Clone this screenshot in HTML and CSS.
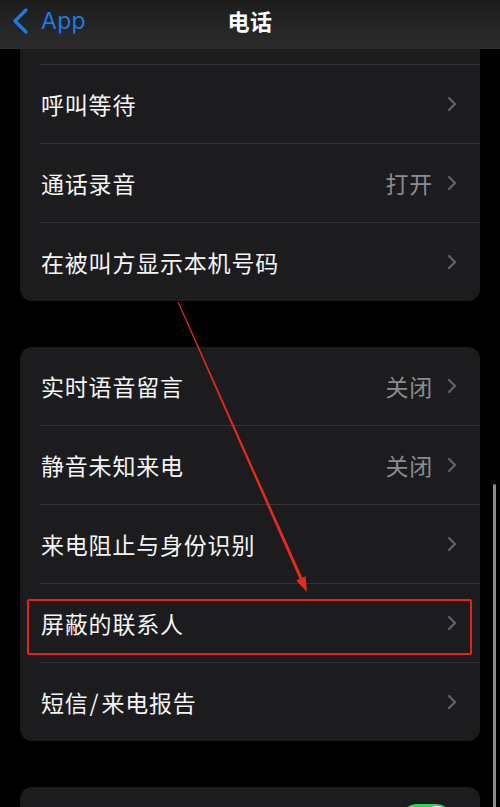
FILE: index.html
```
<!DOCTYPE html>
<html lang="zh-CN">
<head>
<meta charset="utf-8">
<title>电话</title>
<link rel="stylesheet" href="styles.css">
</head>
<body>
<div class="screen">
  <header class="nav">
    <div class="back">
      <svg class="back-icon" width="18" height="26" viewBox="0 0 18 26"><path d="M15 2 L4 13 L15 24" fill="none" stroke="#1f7be0" stroke-width="3.2" stroke-linecap="round" stroke-linejoin="round"/></svg>
      <span class="back-label">App</span>
    </div>
    <div class="title">电话</div>
  </header>

  <main class="content">
    <section class="group group-top">
      <div class="stub"></div>
      <div class="row"><span class="label">呼叫等待</span><span class="right"><svg class="chev" width="10" height="16" viewBox="0 0 10 16"><path d="M2 2 L8 8 L2 14" fill="none" stroke="#616165" stroke-width="2.3" stroke-linecap="round" stroke-linejoin="round"/></svg></span></div>
      <div class="row"><span class="label">通话录音</span><span class="right"><span class="value">打开</span><svg class="chev" width="10" height="16" viewBox="0 0 10 16"><path d="M2 2 L8 8 L2 14" fill="none" stroke="#616165" stroke-width="2.3" stroke-linecap="round" stroke-linejoin="round"/></svg></span></div>
      <div class="row"><span class="label">在被叫方显示本机号码</span><span class="right"><svg class="chev" width="10" height="16" viewBox="0 0 10 16"><path d="M2 2 L8 8 L2 14" fill="none" stroke="#616165" stroke-width="2.3" stroke-linecap="round" stroke-linejoin="round"/></svg></span></div>
    </section>

    <section class="group">
      <div class="row"><span class="label">实时语音留言</span><span class="right"><span class="value">关闭</span><svg class="chev" width="10" height="16" viewBox="0 0 10 16"><path d="M2 2 L8 8 L2 14" fill="none" stroke="#616165" stroke-width="2.3" stroke-linecap="round" stroke-linejoin="round"/></svg></span></div>
      <div class="row"><span class="label">静音未知来电</span><span class="right"><span class="value">关闭</span><svg class="chev" width="10" height="16" viewBox="0 0 10 16"><path d="M2 2 L8 8 L2 14" fill="none" stroke="#616165" stroke-width="2.3" stroke-linecap="round" stroke-linejoin="round"/></svg></span></div>
      <div class="row"><span class="label">来电阻止与身份识别</span><span class="right"><svg class="chev" width="10" height="16" viewBox="0 0 10 16"><path d="M2 2 L8 8 L2 14" fill="none" stroke="#616165" stroke-width="2.3" stroke-linecap="round" stroke-linejoin="round"/></svg></span></div>
      <div class="row row-marked"><span class="label">屏蔽的联系人</span><span class="right"><svg class="chev" width="10" height="16" viewBox="0 0 10 16"><path d="M2 2 L8 8 L2 14" fill="none" stroke="#616165" stroke-width="2.3" stroke-linecap="round" stroke-linejoin="round"/></svg></span><span class="highlight"></span></div>
      <div class="row"><span class="label">短信<span class="slash">/</span>来电报告</span><span class="right"><svg class="chev" width="10" height="16" viewBox="0 0 10 16"><path d="M2 2 L8 8 L2 14" fill="none" stroke="#616165" stroke-width="2.3" stroke-linecap="round" stroke-linejoin="round"/></svg></span></div>
    </section>

    <section class="group group-bottom">
      <div class="row row-toggle"><span class="label"></span><span class="toggle"><span class="knob"></span></span></div>
    </section>
  </main>

  <svg class="arrow" width="500" height="807" viewBox="0 0 500 807">
    <polygon points="177.6,302.2 178.6,301.8 302.4,577.7 305.6,576.2 307,592 296.3,580.4 299.5,578.9" fill="#e52a1e"/>
  </svg>
  <div class="scrollbar"></div>
</div>
</body>
</html>
```
FILE: styles.css
```
html, body {
  margin: 0;
  padding: 0;
  background: #000;
}
body {
  font-family: "Noto Sans CJK SC", "Noto Sans", "Liberation Sans", sans-serif;
  color: #f4f4f4;
}
.screen {
  position: relative;
  width: 500px;
  height: 807px;
  overflow: hidden;
  background: #000;
}
.nav {
  height: 49px;
  background: linear-gradient(180deg, #1c1c1c 0%, #262626 60%, #2b2b2b 100%);
  display: flex;
  align-items: flex-start;
  justify-content: center;
  position: relative;
}
.back {
  position: absolute;
  left: 11px;
  top: 8px;
  display: flex;
  align-items: center;
  gap: 12px;
}
.back-label {
  color: #1f7be0;
  font-family: "Inter", "Liberation Sans", sans-serif;
  font-size: 23px;
  line-height: 26px;
  letter-spacing: 0.3px;
}
.title {
  font-size: 22px;
  font-weight: 600;
  line-height: 40px;
  letter-spacing: 0.5px;
  color: #fff;
}
.content {
  display: flex;
  flex-direction: column;
  gap: 46px;
  padding: 0 20px;
}
.group {
  background: #1c1c1e;
  border-radius: 12px;
  overflow: visible;
}
.group-top {
  border-radius: 0 0 12px 12px;
}
.stub {
  height: 15px;
  margin-left: 20px;
  border-bottom: 1px solid #333336;
}
.row {
  position: relative;
  height: 78px;
  margin-left: 20px;
  padding-left: 1px;
  padding-right: 23px;
  display: flex;
  align-items: center;
  justify-content: space-between;
  border-bottom: 1px solid #333336;
}
.row:last-child {
  border-bottom: none;
}
.label {
  font-size: 23px;
  letter-spacing: 0.8px;
  line-height: 30px;
  color: #f4f4f4;
}
.slash {
  margin: 0 2px 0 1px;
}
.right {
  display: flex;
  align-items: center;
  gap: 14px;
}
.value {
  font-size: 23px;
  letter-spacing: 0.8px;
  line-height: 30px;
  color: #8c8c90;
}
.chev {
  display: block;
}
.highlight {
  position: absolute;
  left: -13px;
  right: 8px;
  top: 15px;
  bottom: 7px;
  border: 2px solid #e0261c;
  border-radius: 2px;
  pointer-events: none;
}
.group-bottom {
  height: 79px;
}
.row-toggle {
  align-items: flex-start;
  padding-right: 28px;
}
.toggle {
  margin-top: 17px;
  width: 51px;
  height: 31px;
  border-radius: 16px;
  background: #30d158;
  position: relative;
}
.knob {
  position: absolute;
  right: 2px;
  top: 2px;
  width: 27px;
  height: 27px;
  border-radius: 50%;
  background: #fff;
}
.arrow {
  position: absolute;
  left: 0;
  top: 0;
  pointer-events: none;
}
.scrollbar {
  position: absolute;
  left: 493px;
  top: 484px;
  width: 3px;
  height: 340px;
  border-radius: 2px;
  background: #8c8c8c;
}
```
